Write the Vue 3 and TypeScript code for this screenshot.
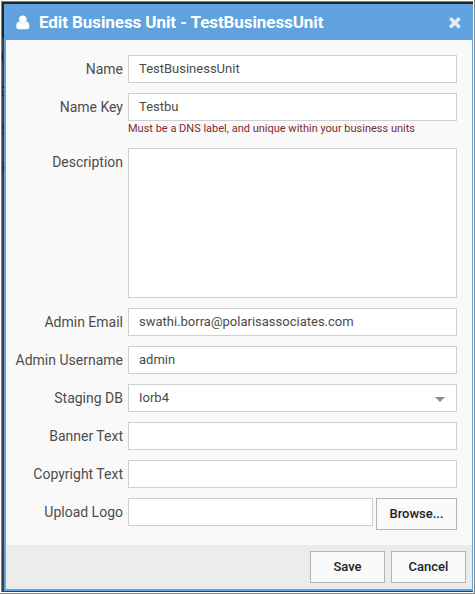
<script setup lang="ts">
import { ref } from 'vue'

interface Field {
  id: string
  label: string
  value: string
  kind: 'text' | 'area' | 'select' | 'file'
  hint?: string
}

const fields = ref<Field[]>([
  { id: 'name', label: 'Name', value: 'TestBusinessUnit', kind: 'text' },
  { id: 'key', label: 'Name Key', value: 'Testbu', kind: 'text', hint: 'Must be a DNS label, and unique within your business units' },
  { id: 'description', label: 'Description', value: '', kind: 'area' },
  { id: 'email', label: 'Admin Email', value: 'swathi.borra@polarisassociates.com', kind: 'text' },
  { id: 'username', label: 'Admin Username', value: 'admin', kind: 'text' },
  { id: 'staging', label: 'Staging DB', value: 'Iorb4', kind: 'select' },
  { id: 'banner', label: 'Banner Text', value: '', kind: 'text' },
  { id: 'copyright', label: 'Copyright Text', value: '', kind: 'text' },
  { id: 'logo', label: 'Upload Logo', value: '', kind: 'file' },
])
</script>

<template>
  <div class="screen">
    <div class="backdrop">
      <svg class="page-edge" width="2" height="587" viewBox="0 0 2 587" aria-hidden="true">
        <path d="M0 49h1v8H0zM0 83h2v1H0zM0 87h1v1H0zM0 91h2v1H0zM0 122h2v1H0zM0 129h2v1H0zM0 159h2v1H0zM1 162h1v3H1zM0 166h1v1H0z" fill="#17191b" />
      </svg>
      <section class="dialog" role="dialog" aria-labelledby="dialog-title">
        <header class="titlebar">
          <svg class="user" width="14" height="15" viewBox="0 0 14 15" aria-hidden="true">
            <circle cx="6.8" cy="4.2" r="3.8" />
            <path d="M3.2 6.6C1.1 6.8 0.2 8.7 0.2 11.6C0.2 13.3 1.1 14.3 2.6 14.3H11C12.5 14.3 13.4 13.3 13.4 11.6C13.4 8.7 12.5 6.8 10.4 6.6C8.4 8.9 5.2 8.9 3.2 6.6Z" />
          </svg>
          <h1 id="dialog-title">Edit Business Unit - TestBusinessUnit</h1>
          <button class="close" type="button" aria-label="Close">
            <svg width="12" height="12" viewBox="0 0 12 12" aria-hidden="true">
              <path d="M3 0.4Q2.4 0 1.8 0.4L0.5 1.7Q0 2.4 0.5 3L3.3 5.8L0.5 8.6Q0 9.2 0.5 9.9L1.8 11.1Q2.4 11.6 3 11.1L5.9 8.3L8.7 11.1Q9.4 11.6 10 11.1L11.3 9.9Q11.8 9.2 11.3 8.6L8.5 5.8L11.3 3Q11.8 2.4 11.3 1.7L10 0.4Q9.4 0 8.7 0.4L5.9 3.2Z" />
            </svg>
          </button>
        </header>

        <form class="form" @submit.prevent>
          <div v-for="field in fields" :key="field.id" class="row">
            <label :for="field.id">{{ field.label }}</label>
            <div class="control">
              <textarea v-if="field.kind === 'area'" :id="field.id" v-model="field.value" class="box area"></textarea>
              <div v-else-if="field.kind === 'select'" :id="field.id" class="box select" role="combobox" tabindex="0">
                <span>{{ field.value }}</span>
                <svg width="10" height="5" viewBox="0 0 10 5" aria-hidden="true"><path d="M0 0H10L5 5Z" /></svg>
              </div>
              <div v-else-if="field.kind === 'file'" class="file">
                <input :id="field.id" v-model="field.value" class="box" type="text" readonly />
                <button class="btn browse" type="button">Browse...</button>
              </div>
              <input v-else :id="field.id" v-model="field.value" class="box" type="text" spellcheck="false" />
              <p v-if="field.hint" class="hint">{{ field.hint }}</p>
            </div>
          </div>
        </form>

        <footer class="actions">
          <button class="btn" type="button">Save</button>
          <button class="btn" type="button">Cancel</button>
        </footer>
      </section>
    </div>
  </div>
</template>

<style>
body {
  margin: 0;
  background: #fff;
}
</style>

<style scoped>
.screen {
  box-sizing: border-box;
  width: 475px;
  height: 594px;
  padding: 1px 0 0 1px;
  background: #fff;
  border-right: 1px solid #808080;
  border-bottom: 1px solid #808080;
  font-family: Roboto, "Liberation Sans", sans-serif;
}
.backdrop {
  box-sizing: border-box;
  display: flex;
  width: 472px;
  height: 591px;
  border-top: 1px solid #808080;
  border-left: 1px solid #808080;
  padding-top: 2px;
  padding-bottom: 1px;
  background: linear-gradient(#222629 36px, #3c3f41 36px);
}
.page-edge {
  flex: none;
}
.dialog {
  box-sizing: border-box;
  display: flex;
  flex-direction: column;
  width: 469px;
  height: 587px;
  border: solid #5fa2dd;
  border-width: 0 1px 2px 2px;
  background: #f9f9f9;
}
.titlebar {
  display: flex;
  align-items: center;
  flex: none;
  height: 36px;
  padding: 0 11px 0 10px;
  background: #5fa2dd;
}
.user {
  fill: #fff;
}
h1 {
  flex: 1;
  margin: 0 0 0 9px;
  color: #fff;
  font-size: 17px;
  font-weight: 700;
  letter-spacing: -0.08px;
  line-height: 36px;
  white-space: nowrap;
}
.close {
  display: flex;
  padding: 2px 0 0;
  border: 0;
  background: none;
}
.close path {
  fill: #e0edf9;
}
.form {
  flex: 1;
  display: flex;
  flex-direction: column;
  gap: 10px;
  padding: 15px 15px 0 0;
}
.row {
  display: flex;
}
.row label {
  flex: none;
  width: 117px;
  margin-right: 5px;
  color: #4d4d4d;
  font-size: 14px;
  line-height: 28px;
  text-align: right;
  white-space: nowrap;
}
.control {
  flex: 1;
  display: flex;
  flex-direction: column;
  min-width: 0;
}
.box {
  box-sizing: border-box;
  width: 100%;
  height: 28px;
  margin: 0;
  padding: 0 10px 2px;
  border: 1px solid #cfcfcf;
  border-radius: 0;
  outline: 0;
  background: #fff;
  color: #4a4a4a;
  font-family: inherit;
  font-size: 13px;
  line-height: 24px;
}
.area {
  display: block;
  height: 150px;
  resize: none;
}
.select {
  display: flex;
  align-items: center;
  justify-content: space-between;
  padding: 0 11px 0 10px;
}
.select svg {
  margin-top: 2px;
  fill: #8c8c8c;
}
.hint {
  height: 17px;
  margin: 0;
  color: #7e2a2f;
  font-size: 11px;
  line-height: 15px;
  white-space: nowrap;
}
.file {
  display: flex;
  align-items: flex-start;
  gap: 3px;
}
.btn {
  box-sizing: border-box;
  flex: none;
  width: 75px;
  height: 32px;
  padding: 0;
  border: 1px solid #b3b3b3;
  border-radius: 0;
  background: #fafafa;
  color: #222;
  font-family: inherit;
  font-size: 13px;
  font-weight: 500;
  line-height: 30px;
}
.browse {
  width: 81px;
}
.actions {
  display: flex;
  justify-content: flex-end;
  flex: none;
  box-sizing: border-box;
  height: 44px;
  gap: 6px;
  padding: 6px 6px 0 0;
  background: #ececec;
}
</style>
